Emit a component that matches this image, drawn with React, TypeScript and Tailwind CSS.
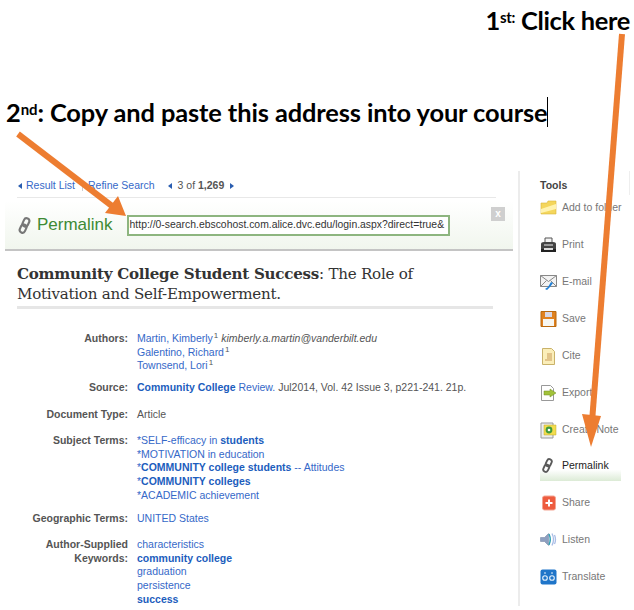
import type { ReactNode } from 'react'

const LINK = 'text-[#3568c8]'
const STRONG = 'font-bold text-[#1c5dbd]'

function Chain({ size = 16, color = '#5a5a5a' }: { size?: number; color?: string }) {
  return (
    <svg width={size} height={size} viewBox="0 0 16 16" fill="none">
      <g transform="rotate(25 8 8)" stroke={color} strokeWidth="2">
        <rect x="5.4" y="0.8" width="5.2" height="8" rx="2.6" />
        <rect x="5.4" y="7.2" width="5.2" height="8" rx="2.6" />
      </g>
    </svg>
  )
}

const FolderIcon = () => (
  <svg width="17" height="16" viewBox="0 0 17 16">
    <path d="M1 3h6l1-2h8v13H1z" fill="#f4d65c" stroke="#d9b53c" strokeWidth="0.6" />
    <path d="M1 9 16 4v5L1 13z" fill="#fff3b0" />
  </svg>
)
const PrintIcon = () => (
  <svg width="17" height="16" viewBox="0 0 17 16">
    <path d="M5 1h7v5H5z" fill="#f4f4f4" stroke="#555" />
    <path d="M1 7q0-2 3-2h9q3 0 3 2v6H1z" fill="#444" />
    <path d="M4 7h9v2H4z" fill="#999" />
    <path d="M1 12h15v3H1z" fill="#222" />
    <path d="M4 11h9v2H4z" fill="#ddd" />
  </svg>
)
const MailIcon = () => (
  <svg width="17" height="16" viewBox="0 0 17 16">
    <path d="M0.5 1.5h16v11H0.5z" fill="#f3f3f3" stroke="#888" />
    <path d="m.5 1.5 8 6 8-6M.5 12.5l6-6M16.5 12.5l-6-6" fill="none" stroke="#888" />
    <path d="m5 15 3-2 3-5 2 1-3 4-3 3z" fill="#1f7fd6" />
  </svg>
)
const SaveIcon = () => (
  <svg width="17" height="16" viewBox="0 0 17 16">
    <path d="M1 0.5h15v15H1z" fill="#e0811f" stroke="#b9690f" />
    <path d="M5 1h7v5H5z" fill="#d7d7e4" />
    <path d="M3 8h11v7H3z" fill="#f7f7f2" />
  </svg>
)
const CiteIcon = () => (
  <svg width="17" height="17" viewBox="0 0 17 17">
    <path d="M2.5.5h9l3 3v13h-12z" fill="#fbeeb9" stroke="#c9b26a" />
    <path d="M7 6h5M7 8h5M7 10h5M5 12h7" stroke="#c99a5a" strokeWidth="1.2" />
  </svg>
)
const ExportIcon = () => (
  <svg width="17" height="16" viewBox="0 0 17 16">
    <path d="M1.5.5h9l3 3v12h-12z" fill="#fff" stroke="#999" />
    <path d="M4 6h6V4l6 4-6 4v-2H4z" fill="#a2c23a" stroke="#6f8a22" strokeWidth="0.5" />
  </svg>
)
const NoteIcon = () => (
  <svg width="17" height="17" viewBox="0 0 17 17">
    <path d="M1 1h12v15H1z" fill="#eee" stroke="#999" />
    <path d="M4 3h12v10H4z" fill="#f2dc4e" stroke="#bda92c" strokeWidth="0.5" />
    <circle cx="9" cy="8" r="3.4" fill="#3f9a3c" />
    <circle cx="9" cy="8" r="1.3" fill="#fff" />
  </svg>
)
const ShareIcon = () => (
  <svg width="17" height="16" viewBox="0 0 17 16">
    <rect x="2.5" y="1" width="13" height="14" rx="2" fill="#ee5c3f" stroke="#f3a593" />
    <path d="M9 4.500v7M5.500 8h7" stroke="#fff" strokeWidth="2" />
  </svg>
)
const ListenIcon = () => (
  <svg width="17" height="15" viewBox="0 0 17 15">
    <path d="M0.500 5.500h4l4-4v12l-4-4h-4z" fill="#8e9fc0" stroke="#6f7f9e" strokeWidth="0.500" />
    <path d="M9 2q2.500 5.500 0 11" fill="none" stroke="#2d9fb3" strokeWidth="1.400" />
    <path d="M12 1.500q3 6 0 12M14.500 3q2 4.500 0 9" fill="none" stroke="#a9bde6" strokeWidth="1.300" />
  </svg>
)
const TranslateIcon = () => (
  <svg width="17" height="16" viewBox="0 0 17 16">
    <rect x="0.500" y="0.500" width="16" height="15" rx="2" fill="#1f75c9" />
    <circle cx="5" cy="9" r="2.300" fill="none" stroke="#e6f1fb" strokeWidth="1.100" />
    <circle cx="12" cy="9" r="2.300" fill="none" stroke="#e6f1fb" strokeWidth="1.100" />
    <path d="M5 3v2M12 3v2" stroke="#e6f1fb" />
  </svg>
)

const tools: { label: string; icon: ReactNode; active?: boolean }[] = [
  { label: 'Add to folder', icon: <FolderIcon /> },
  { label: 'Print', icon: <PrintIcon /> },
  { label: 'E-mail', icon: <MailIcon /> },
  { label: 'Save', icon: <SaveIcon /> },
  { label: 'Cite', icon: <CiteIcon /> },
  { label: 'Export', icon: <ExportIcon /> },
  { label: 'Create Note', icon: <NoteIcon /> },
  { label: 'Permalink', icon: <Chain size={15} />, active: true },
  { label: 'Share', icon: <ShareIcon /> },
  { label: 'Listen', icon: <ListenIcon /> },
  { label: 'Translate', icon: <TranslateIcon /> },
]

function Field({ label, className, children }: { label: ReactNode; className: string; children: ReactNode }) {
  return (
    <div className={`flex ${className}`}>
      <div className="w-[123px] shrink-0 text-right font-bold text-[#555]">{label}</div>
      <div className="ml-[9px] whitespace-nowrap">{children}</div>
    </div>
  )
}

const Sup = () => <sup className="text-[8px] leading-none text-[#555] ml-px">1</sup>

export default function App() {
  return (
    <div className="relative w-[634px] h-[610px] overflow-hidden bg-white font-['Liberation_Sans',Arial,sans-serif]">
      {/* instruction lines */}
      <div className="h-[171px] font-['Lato',sans-serif] font-bold text-black text-[25.400px] leading-[30px]">
        <p className="pt-[5px] pr-[4px] text-right tracking-[-0.300px]">
          1<sup className="text-[15px] leading-none">st:</sup> Click here
        </p>
        <div className="mt-[62px] ml-[6px] flex items-center">
          <p className="tracking-[-0.100px]">
            2<sup className="text-[15px] leading-none">nd</sup>: Copy and paste this address into your course
          </p>
          <span className="h-[30px] w-px bg-black" />
        </div>
      </div>

      <div className="flex h-[435px]">
        {/* record */}
        <div className="w-[518px] shrink-0 pl-[5px] pr-[5px] text-[10.500px] leading-[13.700px] text-[#555]">
          <div className="ml-[12px] w-[479px] h-[27px] border-b border-[#e8e8e8] pt-[3px] pl-[1px] flex items-center">
            <span className="mr-[4px] h-0 w-0 border-y-[3.500px] border-r-[4px] border-y-transparent border-r-[#2a5db0]" />
            <span className={LINK}>Result List</span>
            <span className="ml-[7px] h-[10px] w-px bg-[#ccc]" />
            <span className={`ml-[5px] ${LINK}`}>Refine Search</span>
            <span className="ml-[13px] mr-[6px] h-0 w-0 border-y-[3.500px] border-r-[4px] border-y-transparent border-r-[#2a5db0]" />
            <span>
              3 of <b>1,269</b>
            </span>
            <span className="ml-[6px] h-0 w-0 border-y-[3.500px] border-l-[4px] border-y-transparent border-l-[#2a5db0]" />
          </div>

          <div className="relative mt-[3px] flex h-[50px] items-center border-b-2 border-[#c4c4c4] bg-gradient-to-b from-white to-[#f1f6ee] pl-[11px]">
            <Chain size={17} color="#777" />
            <span className="ml-[4px] text-[17px] text-[#3d8a34]">Permalink</span>
            <div className="ml-[14px] flex h-[21px] w-[323px] items-center whitespace-nowrap border-2 border-[#8db57f] bg-white pl-[1px] text-[10.400px] text-[#333]">
              http://0-search.ebscohost.com.alice.dvc.edu/login.aspx?direct=true&amp;
            </div>
            <span className="absolute right-[8px] top-[6px] flex h-[14px] w-[14px] items-center justify-center bg-[#cfcfcf] text-[10px] font-bold text-white">
              x
            </span>
          </div>

          <h1 className="ml-[12px] mt-[13px] w-[476px] border-b-[3px] border-[#e6e6e6] pb-[2px] font-['DejaVu_Serif',serif] text-[15.100px] leading-[20px] tracking-[-0.250px] text-[#333]">
            <b>Community College Student Success</b>: The Role of
            <br />
            Motivation and Self-Empowerment.
          </h1>

          <Field label="Authors:" className="mt-[23px]">
            <div>
              <span className={LINK}>Martin, Kimberly</span>
              <Sup /> <i>kimberly.a.martin@vanderbilt.edu</i>
            </div>
            <div>
              <span className={LINK}>Galentino, Richard</span>
              <Sup />
            </div>
            <div>
              <span className={LINK}>Townsend, Lori</span>
              <Sup />
            </div>
          </Field>
          <Field label="Source:" className="mt-[8px]">
            <span className={STRONG}>Community College</span> <span className={LINK}>Review.</span> Jul2014, Vol. 42 Issue 3, p221-241. 21p.
          </Field>
          <Field label="Document Type:" className="mt-[13px]">
            Article
          </Field>
          <Field label="Subject Terms:" className="mt-[12.400px]">
            <div className={LINK}>
              *SELF-efficacy in <span className={STRONG}>students</span>
            </div>
            <div className={LINK}>*MOTIVATION in education</div>
            <div className={LINK}>
              *<span className={STRONG}>COMMUNITY college students</span> -- Attitudes
            </div>
            <div className={LINK}>
              *<span className={STRONG}>COMMUNITY colleges</span>
            </div>
            <div className={LINK}>*ACADEMIC achievement</div>
          </Field>
          <Field label="Geographic Terms:" className="mt-[9.600px]">
            <span className={LINK}>UNITED States</span>
          </Field>
          <Field
            label={
              <>
                Author-Supplied
                <br />
                Keywords:
              </>
            }
            className="mt-[12.300px]"
          >
            <div className={LINK}>characteristics</div>
            <div className={STRONG}>community college</div>
            <div className={LINK}>graduation</div>
            <div className={LINK}>persistence</div>
            <div className={STRONG}>success</div>
          </Field>
        </div>

        {/* tools column */}
        <div className="w-[112px] border-l-2 border-[#ececec] pl-[20px] text-[10.500px] text-[#777]">
          <div className="h-[24px] border-r border-[#eeeeee] pt-[8px] font-bold leading-[13px] text-[#444]">Tools</div>
          <ul className="mt-[5px]">
            {tools.map((tool) => (
              <li
                key={tool.label}
                className={
                  tool.active
                    ? '-mt-[1px] mb-[14px] flex h-[23px] w-[81px] items-start whitespace-nowrap bg-gradient-to-b from-white from-50% to-[#dcebd6] text-[#222]'
                    : 'flex h-[37px] items-start whitespace-nowrap'
                }
              >
                <span className="flex w-[22px] shrink-0 justify-start">{tool.icon}</span>
                <span className="leading-[14px]">{tool.label}</span>
              </li>
            ))}
          </ul>
        </div>
      </div>

      {/* orange annotation arrows */}
      <svg className="absolute inset-0 pointer-events-none" width="634" height="610" viewBox="0 0 634 610">
        <path d="M622 34 592 422" stroke="#ed7d31" strokeWidth="6" fill="none" />
        <path d="M582 414 591 447 601 416z" fill="#ed7d31" />
        <path d="M18 134 112 206" stroke="#ed7d31" strokeWidth="6" fill="none" />
        <path d="M105 213 126 216 118 196z" fill="#ed7d31" />
      </svg>
    </div>
  )
}
